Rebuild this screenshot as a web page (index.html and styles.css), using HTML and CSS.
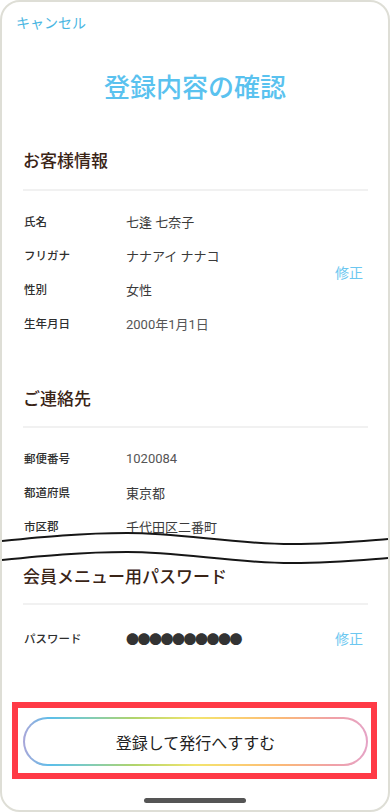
FILE: index.html
```html
<!DOCTYPE html>
<html lang="ja">
<head>
<meta charset="utf-8">
<meta name="viewport" content="width=device-width, initial-scale=1">
<title>登録内容の確認</title>
<link rel="stylesheet" href="styles.css">
</head>
<body>
<div class="frame">
  <header class="top">
    <a class="cancel">キャンセル</a>
    <h1 class="title">登録内容の確認</h1>
  </header>

  <section class="sec sec-customer">
    <h2 class="sec-title">お客様情報</h2>
    <div class="sec-body">
      <dl class="rows">
        <div class="row"><dt>氏名</dt><dd>七逢 七奈子</dd></div>
        <div class="row"><dt>フリガナ</dt><dd>ナナアイ ナナコ</dd></div>
        <div class="row"><dt>性別</dt><dd>女性</dd></div>
        <div class="row"><dt>生年月日</dt><dd class="light">2000年1月1日</dd></div>
      </dl>
      <a class="edit">修正</a>
    </div>
  </section>

  <section class="sec sec-contact">
    <h2 class="sec-title">ご連絡先</h2>
    <div class="sec-body">
      <dl class="rows">
        <div class="row"><dt>郵便番号</dt><dd class="light">1020084</dd></div>
        <div class="row"><dt>都道府県</dt><dd>東京都</dd></div>
        <div class="row"><dt>市区郡</dt><dd>千代田区二番町</dd></div>
      </dl>
    </div>
  </section>

  <svg class="cut" viewBox="0 0 386 36" preserveAspectRatio="none" aria-hidden="true">
    <path class="cut-fill" d="M0,13 C40,9 80,5 125,5 C180,5 230,16 290,16 C330,16 360,13 386,11 L386,30 C360,32 330,35 290,35 C230,35 180,24 125,24 C80,24 40,28 0,32 Z"/>
    <path class="cut-line" d="M0,13 C40,9 80,5 125,5 C180,5 230,16 290,16 C330,16 360,13 386,11"/>
    <path class="cut-line" d="M0,32 C40,28 80,24 125,24 C180,24 230,35 290,35 C330,35 360,32 386,30"/>
  </svg>

  <section class="sec sec-password">
    <h2 class="sec-title">会員メニュー用パスワード</h2>
    <div class="sec-body">
      <dl class="rows">
        <div class="row"><dt>パスワード</dt><dd class="dots">●●●●●●●●●●</dd></div>
      </dl>
      <a class="edit">修正</a>
    </div>
  </section>

  <div class="bottom">
    <div class="highlight">
      <button class="cta" type="button">登録して発行へすすむ</button>
    </div>
    <div class="home-bar"></div>
  </div>
</div>
</body>
</html>
```

FILE: styles.css
```css
* { box-sizing: border-box; }

html, body {
  margin: 0;
  padding: 0;
  background: #ffffff;
}

body {
  font-family: Roboto, "Noto Sans CJK JP", sans-serif;
  color: #333333;
}

.frame {
  width: 390px;
  height: 812px;
  border: 2px solid #deded6;
  border-radius: 20px;
  background: #ffffff;
  display: flex;
  flex-direction: column;
  overflow: hidden;
}

.top {
  padding-top: 10px;
}

.cancel {
  display: block;
  padding-left: 14px;
  font-family: "Noto Sans CJK JP", sans-serif;
  font-size: 14px;
  line-height: 20px;
  color: #4ab6e2;
}

.title {
  margin: 36px 0 0;
  text-align: center;
  font-family: "Noto Sans CJK JP", sans-serif;
  font-size: 26px;
  line-height: 36px;
  font-weight: 500;
  color: #5ac2ef;
}

.sec {
  margin: 0 20px 0 21px;
}

.sec-customer { margin-top: 44px; }
.sec-contact { margin-top: 46px; }

.sec-title {
  margin: 0;
  padding: 0 0 17px 0;
  border-bottom: 2px solid #f1f1f1;
  font-family: "Noto Sans CJK JP", sans-serif;
  font-size: 17px;
  line-height: 24px;
  font-weight: 500;
  color: #3a2416;
}

.sec-contact .sec-title { padding-bottom: 16px; }
.sec-password .sec-title { padding-bottom: 15px; }

.sec-body {
  display: flex;
  align-items: center;
  padding-top: 13px;
}

.sec-password .sec-body { padding-top: 16px; }

.rows {
  flex: 1;
  margin: 0;
}

.row {
  display: flex;
  align-items: center;
  height: 34px;
}

.row dt {
  width: 103px;
  padding-left: 1px;
  font-family: "Noto Sans CJK JP", sans-serif;
  font-size: 11.5px;
  font-weight: 500;
  color: #2e2e2e;
}

.row dd {
  margin: 0;
  font-size: 13px;
  color: #3a3a3a;
}

.row dd.light {
  color: #555555;
}

.row dd.dots {
  font-family: "Noto Sans CJK JP", sans-serif;
  font-size: 13px;
  letter-spacing: -1.5px;
  color: #333333;
}

.edit {
  margin-right: 5px;
  font-family: "Noto Sans CJK JP", sans-serif;
  font-size: 14px;
  line-height: 20px;
  color: #6cc7f0;
}

.cut {
  display: block;
  width: 386px;
  height: 36px;
  margin-top: -15px;
  overflow: visible;
  position: relative;
}

.cut-fill {
  fill: #ffffff;
}

.cut-line {
  fill: none;
  stroke: #161616;
  stroke-width: 2;
}

.bottom {
  margin-top: auto;
  display: flex;
  flex-direction: column;
  align-items: center;
}

.highlight {
  align-self: flex-start;
  width: 365px;
  margin-left: 10px;
  border: 6px solid #ff3a46;
  padding: 9px 3px 7px 5px;
}

.cta {
  display: flex;
  align-items: center;
  justify-content: center;
  width: 345px;
  height: 49px;
  border: 2px solid transparent;
  border-radius: 999px;
  background:
    linear-gradient(#ffffff, #ffffff) padding-box,
    linear-gradient(90deg, #a9a6d9 0%, #5cbfea 8%, #7ccbc0 18%, #b0d46c 32%, #f2e56e 50%, #fbd071 62%, #fbb978 75%, #f0a1a8 90%, #e5a3c6 100%) border-box;
  font-family: "Noto Sans CJK JP", sans-serif;
  font-size: 16px;
  font-weight: 400;
  color: #222222;
  padding: 0;
}

.home-bar {
  width: 102px;
  height: 5px;
  margin-top: 19px;
  margin-bottom: 7px;
  border-radius: 3px;
  background: #555555;
}
```
